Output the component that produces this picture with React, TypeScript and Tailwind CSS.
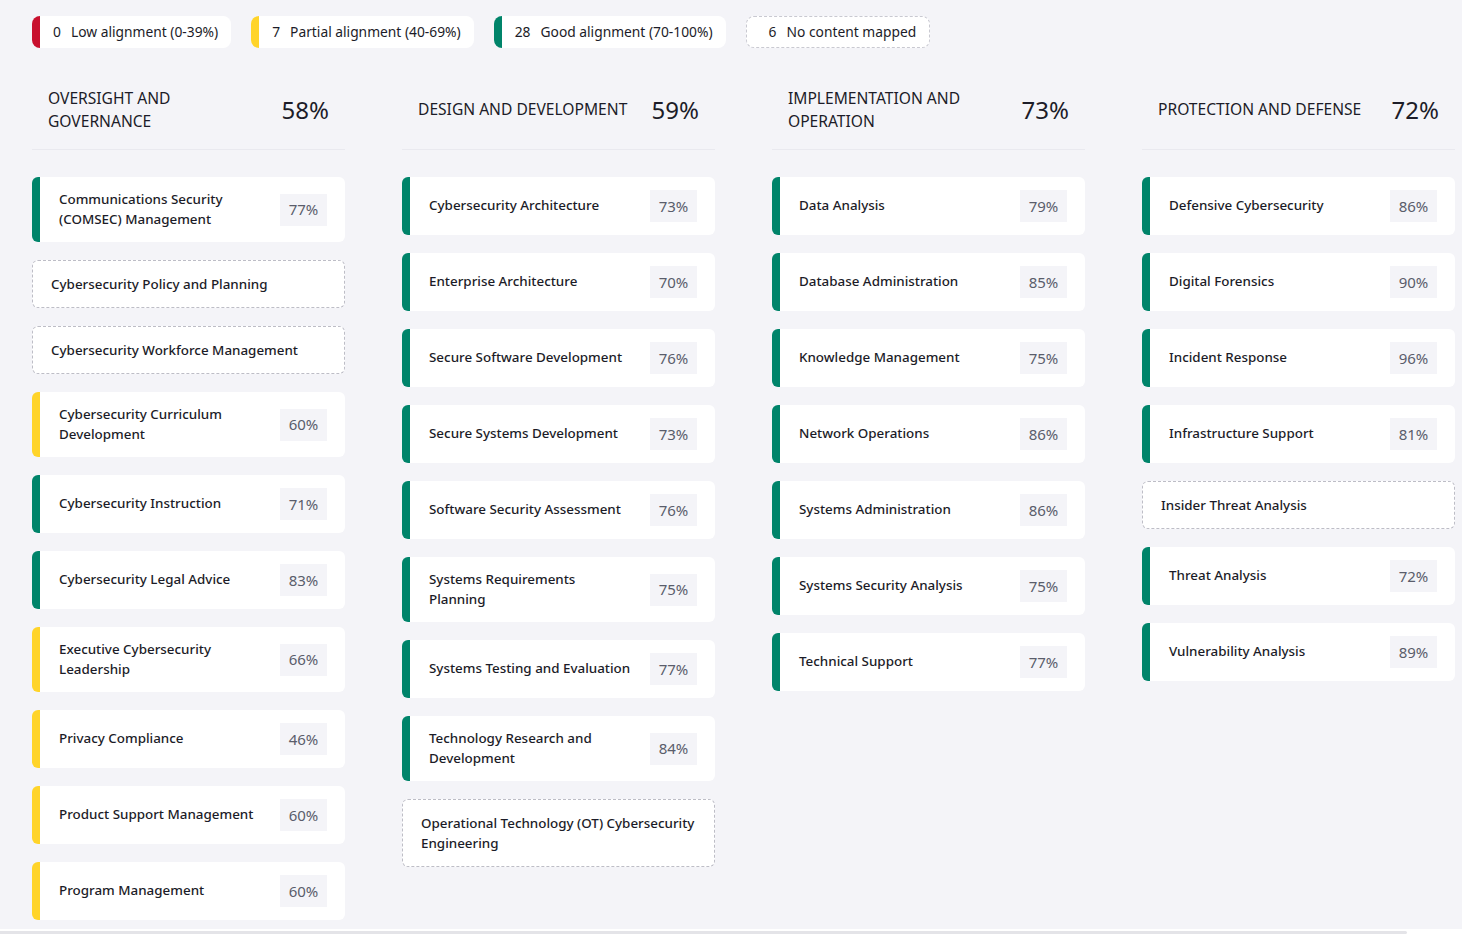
import React from 'react';

type Item = { name: string; score: number | null };
type Area = { title: string; score: number; items: Item[] };

const areas: Area[] = [
  {
    title: 'Oversight and Governance',
    score: 58,
    items: [
      { name: 'Communications Security (COMSEC) Management', score: 77 },
      { name: 'Cybersecurity Policy and Planning', score: null },
      { name: 'Cybersecurity Workforce Management', score: null },
      { name: 'Cybersecurity Curriculum Development', score: 60 },
      { name: 'Cybersecurity Instruction', score: 71 },
      { name: 'Cybersecurity Legal Advice', score: 83 },
      { name: 'Executive Cybersecurity Leadership', score: 66 },
      { name: 'Privacy Compliance', score: 46 },
      { name: 'Product Support Management', score: 60 },
      { name: 'Program Management', score: 60 },
    ],
  },
  {
    title: 'Design and Development',
    score: 59,
    items: [
      { name: 'Cybersecurity Architecture', score: 73 },
      { name: 'Enterprise Architecture', score: 70 },
      { name: 'Secure Software Development', score: 76 },
      { name: 'Secure Systems Development', score: 73 },
      { name: 'Software Security Assessment', score: 76 },
      { name: 'Systems Requirements Planning', score: 75 },
      { name: 'Systems Testing and Evaluation', score: 77 },
      { name: 'Technology Research and Development', score: 84 },
      { name: 'Operational Technology (OT) Cybersecurity Engineering', score: null },
    ],
  },
  {
    title: 'Implementation and Operation',
    score: 73,
    items: [
      { name: 'Data Analysis', score: 79 },
      { name: 'Database Administration', score: 85 },
      { name: 'Knowledge Management', score: 75 },
      { name: 'Network Operations', score: 86 },
      { name: 'Systems Administration', score: 86 },
      { name: 'Systems Security Analysis', score: 75 },
      { name: 'Technical Support', score: 77 },
    ],
  },
  {
    title: 'Protection and Defense',
    score: 72,
    items: [
      { name: 'Defensive Cybersecurity', score: 86 },
      { name: 'Digital Forensics', score: 90 },
      { name: 'Incident Response', score: 96 },
      { name: 'Infrastructure Support', score: 81 },
      { name: 'Insider Threat Analysis', score: null },
      { name: 'Threat Analysis', score: 72 },
      { name: 'Vulnerability Analysis', score: 89 },
    ],
  },
];

function barClass(score: number): string {
  if (score < 40) return 'border-l-[#c8102e]';
  if (score < 70) return 'border-l-[#ffd42a]';
  return 'border-l-[#00846a]';
}

function LegendPill({ count, label, bar }: { count: number; label: string; bar?: string }) {
  if (!bar) {
    return (
      <div className="h-8 flex items-center gap-[10px] pl-[22px] pr-[13px] rounded-lg border border-dashed border-[#c9c9d1] bg-white text-[13.8px]">
        <span>{count}</span>
        <span>{label}</span>
      </div>
    );
  }
  return (
    <div className={`h-8 flex items-center gap-[10px] pl-[13px] pr-[13px] rounded-lg border-l-8 bg-white text-[13.8px] ${bar}`}>
      <span>{count}</span>
      <span>{label}</span>
    </div>
  );
}

function ItemCard({ item }: { item: Item }) {
  if (item.score === null) {
    return (
      <div className="rounded-md border border-dashed border-[#bdbdc6] bg-white pl-[18px] pr-[18px] py-[13px] text-[13.4px] leading-[20px] font-medium">
        {item.name}
      </div>
    );
  }
  return (
    <div className={`flex items-center rounded-md border-l-8 bg-white pl-[19px] pr-[18px] py-[13px] ${barClass(item.score)}`}>
      <div className="flex-1 min-w-0 pr-[18px] text-[13.4px] leading-[19.5px] font-medium">{item.name}</div>
      <div className="w-[47px] h-8 shrink-0 flex items-center justify-center bg-[#f4f4f8] text-[15px] text-[#5a5d6b]">
        {item.score}%
      </div>
    </div>
  );
}

function AreaColumn({ area }: { area: Area }) {
  return (
    <div className="flex flex-col">
      <div className="h-20 flex items-center gap-4 px-4 border-b border-[#e9e9ef]">
        <div className="flex-1 text-[15.6px] leading-[23px] uppercase">{area.title}</div>
        <div className="shrink-0 text-2xl">{area.score}%</div>
      </div>
      <div className="flex flex-col gap-[18px] mt-[27px]">
        {area.items.map(it => (
          <ItemCard key={it.name} item={it} />
        ))}
      </div>
    </div>
  );
}

export default function App() {
  return (
    <div className="w-[1462px] h-[934px] flex flex-col overflow-hidden bg-[#f4f4f8] text-[#1c1c28] font-['Noto_Sans',sans-serif]">
      <div className="flex-1 min-h-0 pl-8 pt-4">
        {/* Legend */}
        <div className="flex gap-5">
          <LegendPill count={0} label="Low alignment (0-39%)" bar="border-l-[#c8102e]" />
          <LegendPill count={7} label="Partial alignment (40-69%)" bar="border-l-[#ffd42a]" />
          <LegendPill count={28} label="Good alignment (70-100%)" bar="border-l-[#00846a]" />
          <LegendPill count={6} label="No content mapped" />
        </div>

        {/* Work role areas */}
        <div className="grid grid-cols-[repeat(4,313px)] gap-x-[57px] mt-[22px]">
          {areas.map(a => (
            <AreaColumn key={a.title} area={a} />
          ))}
        </div>
      </div>
      <div className="h-[5px] shrink-0 bg-white pt-[2px]">
        <div className="h-[3px] w-[1407px] rounded-r-full bg-[#e4e4e8]" />
      </div>
    </div>
  );
}
